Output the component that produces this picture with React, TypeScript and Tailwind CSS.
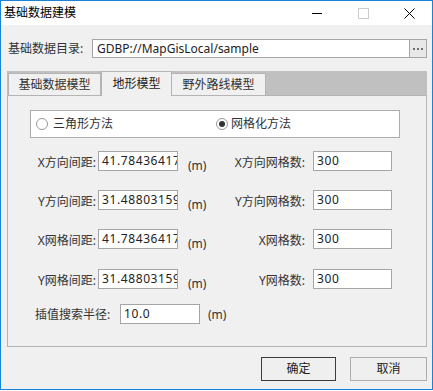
import React, { useState } from "react";

const font = "font-['Noto_Sans','Noto_Sans_CJK_SC',sans-serif]";

interface FieldRow {
  left: string;
  leftValue: string;
  right: string;
  rightValue: string;
  gap: string;
}

const rows: FieldRow[] = [
  { left: "X方向间距:", leftValue: "41.78436417", right: "X方向网格数:", rightValue: "300", gap: "mt-[13px]" },
  { left: "Y方向间距:", leftValue: "31.48803159", right: "Y方向网格数:", rightValue: "300", gap: "mt-[19px]" },
  { left: "X网格间距:", leftValue: "41.78436417", right: "X网格数:", rightValue: "300", gap: "mt-[19px]" },
  { left: "Y网格间距:", leftValue: "31.48803159", right: "Y网格数:", rightValue: "300", gap: "mt-[20px]" },
];

const TextBox: React.FC<{ value: string; width: string }> = ({ value, width }) => (
  <div
    className={`${width} h-[20px] shrink-0 border border-[#a5a5a5] bg-white pl-[3px] text-[12px] leading-[18px] tracking-[0.6px] text-[#222] overflow-hidden whitespace-nowrap`}
  >
    {value}
  </div>
);

const App: React.FC = () => {
  const [method, setMethod] = useState<"tri" | "grid">("grid");

  return (
    <div className={`w-[433px] h-[390px] border border-[#1883d7] bg-[#f0f0f0] flex flex-col ${font} text-[12px] text-[#333]`}>
      {/* title bar */}
      <div className="h-[24px] bg-white flex items-center shrink-0">
        <span className="pl-[3px] text-black leading-none">基础数据建模</span>
        <div className="ml-auto flex items-center h-full">
          <div className="w-[46px] h-full flex items-center justify-center">
            <div className="w-[10px] h-px bg-black mt-[1px]" />
          </div>
          <div className="w-[46px] h-full flex items-center justify-center">
            <div className="w-[11px] h-[11px] border border-[#cccccc]" />
          </div>
          <div className="w-[46px] h-full flex items-center justify-center">
            <svg width="11" height="11" viewBox="0 0 11 11">
              <path d="M0.5 0.5 L10.5 10.5 M10.5 0.5 L0.5 10.5" stroke="#000" strokeWidth="1" />
            </svg>
          </div>
        </div>
      </div>

      <div className="flex-1 flex flex-col pl-[6px] pr-[5px]">
        {/* directory row */}
        <div className="flex items-center mt-[14px] h-[19px]">
          <span className="w-[85px] shrink-0 pl-[1px] mt-[1px]">基础数据目录:</span>
          <div className="w-[318px] h-[19px] border border-[#a5a5a5] bg-white pl-[4px] text-[#222] leading-[17px] whitespace-nowrap overflow-hidden">
            GDBP://MapGisLocal/sample
          </div>
          <div className="w-[17px] h-[19px] border border-l-0 border-[#a5a5a5] bg-[#e8e8e8] flex items-center justify-center gap-[2px]">
            <span className="w-[2px] h-[2px] bg-[#6e6e6e]" />
            <span className="w-[2px] h-[2px] bg-[#6e6e6e]" />
            <span className="w-[2px] h-[2px] bg-[#6e6e6e]" />
          </div>
        </div>

        {/* tabs */}
        <div className="mt-[13px] h-[24px] bg-[#c0c0c0] flex items-end pl-[1px]">
          <div className="w-[93px] h-[22px] border border-b-0 border-[#b4b4b4] bg-[#f0f0f0] flex items-center justify-center">
            基础数据模型
          </div>
          <div className="w-[71px] h-[25px] -mb-px border border-b-0 border-[#b4b4b4] bg-[#f0f0f0] flex items-center justify-center text-[#222] relative z-10">
            地形模型
          </div>
          <div className="w-[94px] h-[22px] border border-b-0 border-l-0 border-[#b4b4b4] bg-[#f0f0f0] flex items-center justify-center">
            野外路线模型
          </div>
        </div>

        <div className="w-[420px] h-[252px] border border-[#b4b4b4] flex flex-col">
          {/* method group */}
          <div className="ml-[22px] mt-[14px] w-[370px] h-[28px] border border-[#adadad] bg-white flex items-center">
            <button
              className="w-[180px] ml-[5px] flex items-center gap-[5px] shrink-0"
              onClick={() => setMethod("tri")}
            >
              <span className="w-[12px] h-[12px] rounded-full border border-[#9a9a9a] bg-white flex items-center justify-center">
                {method === "tri" && <span className="w-[6px] h-[6px] rounded-full bg-[#333]" />}
              </span>
              <span>三角形方法</span>
            </button>
            <button className="flex items-center gap-[3px]" onClick={() => setMethod("grid")}>
              <span className="w-[12px] h-[12px] rounded-full border border-[#9a9a9a] bg-white flex items-center justify-center">
                {method === "grid" && <span className="w-[6px] h-[6px] rounded-full bg-[#333]" />}
              </span>
              <span>网格化方法</span>
            </button>
          </div>

          {rows.map((r) => (
            <div key={r.left + r.right} className={`flex items-center h-[20px] ${r.gap}`}>
              <span className="w-[88px] shrink-0 text-right mt-[4px] whitespace-nowrap">{r.left}</span>
              <div className="ml-[2px]">
                <TextBox value={r.leftValue} width="w-[80px]" />
              </div>
              <span className="w-[18px] ml-[10px] mt-[10px] shrink-0 whitespace-nowrap">(m)</span>
              <span className="w-[99px] shrink-0 text-right mt-[4px] whitespace-nowrap">{r.right}</span>
              <div className="ml-[8px]">
                <TextBox value={r.rightValue} width="w-[79px]" />
              </div>
            </div>
          ))}

          <div className="flex items-center h-[20px] mt-[15px]">
            <span className="w-[112px] shrink-0 pl-[27px] mt-[2px] whitespace-nowrap">插值搜索半径:</span>
            <TextBox value="10.0" width="w-[80px]" />
            <span className="ml-[8px] mt-[2px]">(m)</span>
          </div>
        </div>

        {/* buttons */}
        <div className="flex justify-end mt-[10px] gap-[14px]">
          <button className="w-[75px] h-[24px] border border-[#3c3c3c] bg-[#efefef] text-[#222]">确定</button>
          <button className="w-[77px] h-[24px] border border-[#adadad] bg-[#efefef] text-[#222]">取消</button>
        </div>
      </div>
    </div>
  );
};

export default App;
